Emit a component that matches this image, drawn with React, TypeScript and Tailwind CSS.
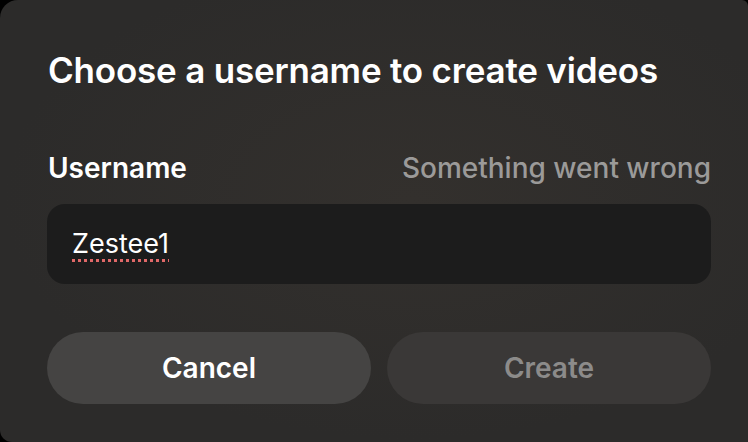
export default function App() {
  return (
    <div className="w-[748px] h-[442px] bg-black overflow-hidden">
      <div
        className="w-full h-full rounded-tl-[18px] rounded-bl-[12px] rounded-tr-[6px] bg-[#2c2b2a] bg-[radial-gradient(ellipse_at_55%_45%,#33302d_0%,#2c2b2a_70%)] pl-[47px] pr-[37px] pt-[46px] text-white"
        style={{ fontFamily: 'Inter, "Noto Sans", sans-serif' }}
      >
        {/* Title */}
        <h1 className="text-[35px] leading-[48px] font-semibold tracking-[-0.2px] pl-[1px]">
          Choose a username to create videos
        </h1>

        {/* Label row */}
        <div className="mt-[56px] flex items-center justify-between text-[28px] leading-[36px] font-semibold">
          <span className="pl-[1px]">Username</span>
          <span className="text-[#9b9a99] font-medium">Something went wrong</span>
        </div>

        {/* Input */}
        <div className="mt-[18px] h-[80px] rounded-[18px] bg-[#1c1c1c] flex items-center px-[25px]">
          <span className="text-[27px] leading-[32px] underline decoration-dotted decoration-[#e06868] decoration-[3px] underline-offset-[6px]">
            Zestee1
          </span>
        </div>

        {/* Buttons */}
        <div className="mt-[48px] grid grid-cols-2 gap-[16px]">
          <button className="h-[72px] rounded-full bg-[#454443] text-[28px] font-semibold text-white">
            Cancel
          </button>
          <button className="h-[72px] rounded-full bg-[#3a3837] text-[28px] font-semibold text-[#8c8b8a]">
            Create
          </button>
        </div>
      </div>
    </div>
  );
}
